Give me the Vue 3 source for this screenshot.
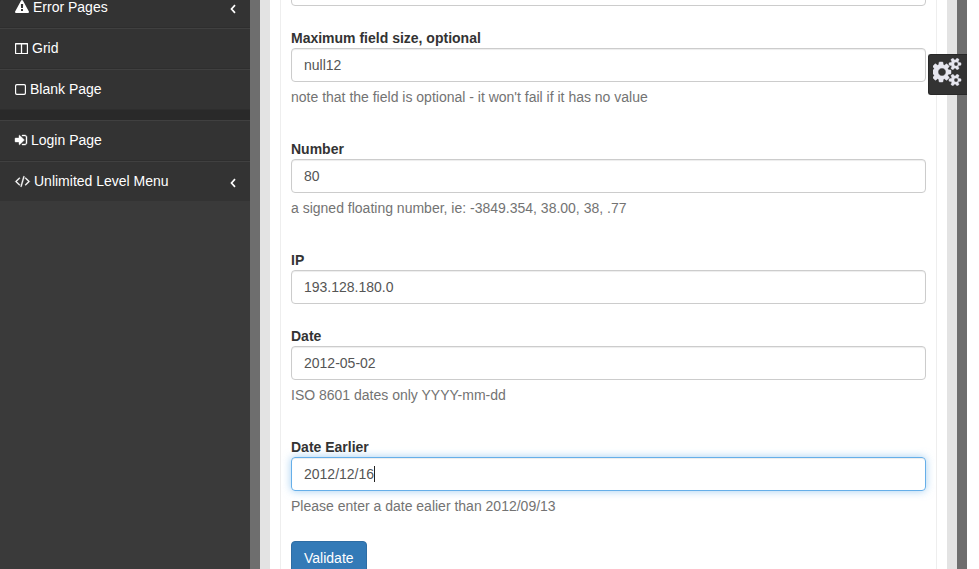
<script setup>
import { ref } from 'vue'

const menu = [
  { label: 'Error Pages', icon: 'warning', width: 14, expandable: true },
  { label: 'Grid', icon: 'columns', width: 13 },
  { label: 'Blank Page', icon: 'square', width: 11, divider: true },
  { label: 'Login Page', icon: 'signin', width: 12 },
  { label: 'Unlimited Level Menu', icon: 'code', width: 15, expandable: true }
]

const fields = ref([
  { id: 'max', label: 'Maximum field size, optional', value: 'null12', help: "note that the field is optional - it won't fail if it has no value" },
  { id: 'number', label: 'Number', value: '80', help: 'a signed floating number, ie: -3849.354, 38.00, 38, .77' },
  { id: 'ip', label: 'IP', value: '193.128.180.0' },
  { id: 'date', label: 'Date', value: '2012-05-02', help: 'ISO 8601 dates only YYYY-mm-dd' },
  { id: 'earlier', label: 'Date Earlier', value: '2012/12/16', help: 'Please enter a date ealier than 2012/09/13', active: true }
])

const smallCog = 'v140q0 16-149 31-12 27-30 52 51 113 51 138 0 4-4 7-122 71-124 71-8 0-46-47t-52-68q-20 2-30 2t-30-2q-14 21-52 68t-46 47q-2 0-124-71-4-3-4-7 0-25 51-138-18-25-30-52-149-15-149-31v-140q0-16 149-31 13-29 30-52-51-113-51-138 0-4 4-7 4-2 35-20t59-34 30-16q8 0 46 46.5t52 67.5q20-2 30-2t30 2q51-71 92-112l6-2q4 0 124 70 4 3 4 7 0 25-51 138 17 23 30 52 149 15 149 31z'
const cogs = 'M832 896q0-106-75-181t-181-75-181 75-75 181 75 181 181 75 181-75 75-181zm768 512q0-52-38-90t-90-38-90 38-38 90q0 53 37.5 90.5t90.5 37.5 90.5-37.5 37.5-90.5zm0-1024q0-52-38-90t-90-38-90 38-38 90q0 53 37.5 90.5t90.5 37.5 90.5-37.5 37.5-90.5zM1152 805v185q0 10-7 19.5t-16 10.5l-155 24q-11 35-32 76 34 48 90 115 7 11 7 20 0 12-7 19-23 30-82.5 89.5t-78.5 59.5q-11 0-21-7l-115-90q-37 19-77 31-11 108-23 155-7 24-30 24h-186q-11 0-20-7.5t-10-17.5l-23-153q-34-10-75-31l-118 89q-7 7-20 7-11 0-21-8-144-133-144-160 0-9 7-19 10-14 41-53t47-61q-23-44-35-82l-152-24q-10-1-17-9.5t-7-19.5v-185q0-10 7-19.5t16-10.5l155-24q11-35 32-76-34-48-90-115-7-11-7-20 0-12 7-20 22-30 82-89t79-59q11 0 21 7l115 90q34-18 77-32 11-108 23-154 7-24 30-24h186q11 0 20 7.5t10 17.5l23 153q34 10 75 31l118-89q8-7 20-7 11 0 21 8 144 133 144 160 0 8-7 19-12 16-42 54t-45 60q23 48 34 82l152 23q10 2 17 10.5t7 19.5zM1792 1338' + smallCog + 'M1792 314' + smallCog
</script>

<template>
  <div class="page">
    <aside class="sidebar">
      <ul class="menu">
        <template v-for="item in menu" :key="item.label">
          <li class="item">
            <svg class="icon" :class="item.icon" :style="{ width: item.width + 'px' }" :viewBox="`0 0 ${item.width * 128} 1792`">
              <path v-if="item.icon === 'warning'" d="M1024 1375v-190q0-14-9.5-23.5t-22.5-9.5h-192q-13 0-22.5 9.5t-9.5 23.5v190q0 14 9.5 23.5t22.5 9.5h192q13 0 22.5-9.5t9.5-23.5zm-2-374l18-459q0-12-10-19-13-11-24-11h-220q-11 0-24 11-10 7-10 21l17 457q0 10 10 16.5t24 6.5h185q14 0 23.5-6.5t10.5-16.5zm-14-934l768 1408q35 63-2 126-17 29-46.5 46t-63.5 17h-1536q-34 0-63.5-17t-46.5-46q-37-63-2-126l768-1408q17-31 47-49t65-18 65 18 47 49z" />
              <path v-else-if="item.icon === 'columns'" fill-rule="evenodd" d="M100 256h1500q64 0 64 64v1280q0 64-64 64h-1500q-64 0-100-64v-1280q0-64 100-64zM150 460v1076h600v-1076zM914 460v1076h600v-1076z" />
              <path v-else-if="item.icon === 'square'" fill-rule="evenodd" d="M224 256h960q224 0 224 224v960q0 224-224 224h-960q-224 0-224-224v-960q0-224 224-224zM250 406q-100 0-100 100v908q0 100 100 100h908q100 0 100-100v-908q0-100-100-100z" />
              <path v-else-if="item.icon === 'signin'" transform="translate(-128 0)" d="M1312 896q0 26-19 45l-544 544q-19 19-45 19t-45-19-19-45v-288h-448q-26 0-45-19t-19-45v-384q0-26 19-45t45-19h448v-288q0-26 19-45t45-19 45 19l544 544q19 19 19 45zm352-352v704q0 119-84.500 203.500t-203.500 84.500h-320q-13 0-22.500-9.500t-9.500-22.500q0-4-1-20t-.5-26.500 3-23.500 10-19.500 20.500-6.500h320q66 0 113-47t47-113v-704q0-66-47-113t-113-47h-312l-11.500-1-11.500-3-8-5.500-7-9-2-13.500q0-4-1-20t-.5-26.500 3-23.500 10-19.500 20.500-6.500h320q119 0 203.500 84.500t84.500 203.500z" />
              <path v-else transform="translate(64 0)" d="M553 1399l-50 50q-10 10-23 10t-23-10l-466-466q-10-10-10-23t10-23l466-466q10-10 23-10t23 10l50 50q10 10 10 23t-10 23l-393 393 393 393q10 10 10 23t-10 23zm591-1067l-373 1291q-4 13-15.500 19.500t-23.500 2.500l-62-17q-13-4-19.500-15.500t-2.500-24.500l373-1291q4-13 15.500-19.500t23.500-2.500l62 17q13 4 19.500 15.500t2.500 24.500zm657 651l-466 466q-10 10-23 10t-23-10l-50-50q-10-10-10-23t10-23l393-393-393-393q-10-10-10-23t10-23l50-50q10-10 23-10t23 10l466 466q10 10 10 23t-10 23z" />
            </svg>
            <span class="label">{{ item.label }}</span>
            <svg v-if="item.expandable" class="angle" viewBox="0 0 6 10"><path d="M5 1.200L1.500 5L5 8.800" /></svg>
          </li>
          <li v-if="item.divider" class="divider"></li>
        </template>
      </ul>
    </aside>

    <main class="content">
      <section class="panel">
        <div class="input previous"></div>
        <div v-for="f in fields" :key="f.id" class="group">
          <label :for="f.id">{{ f.label }}</label>
          <div :id="f.id" class="input" :class="{ active: f.active }">{{ f.value }}<i v-if="f.active" class="caret"></i></div>
          <p v-if="f.help" class="help">{{ f.help }}</p>
        </div>
        <button class="btn">Validate</button>
      </section>
    </main>

    <div class="settings">
      <svg viewBox="0 0 1920 1792"><path fill-rule="evenodd" :d="cogs" /></svg>
    </div>
  </div>
</template>

<style>
body { background: #fff; overflow: hidden; }
</style>

<style scoped>
* { box-sizing: border-box; }
.page {
  position: relative;
  display: flex;
  width: 967px;
  height: 569px;
  overflow: hidden;
  font: 14px/20px "Liberation Sans", Arial, sans-serif;
  color: #333;
}
.sidebar { width: 250px; background: #3a3a3a; }
.menu { list-style: none; margin: -13px 0 0; padding: 0; background: #333; }
.item {
  display: flex;
  align-items: center;
  height: 41px;
  padding: 0 14px 2px 15px;
  border-top: 1px solid #404040;
  border-bottom: 1px solid #2e2e2e;
  color: #fff;
}
.item:last-child { height: 40px; padding-bottom: 1px; border-bottom-color: #333; }
.icon { height: 14px; flex: none; fill: #fff; overflow: visible; }
.signin, .code { stroke: #fff; stroke-width: 50; }
.label { flex: 1; margin-left: 4px; }
.angle { width: 6px; height: 10px; margin-top: 5px; fill: none; stroke: #fff; stroke-width: 1.7; }
.divider { height: 10px; background: #292929; }
.content {
  flex: 1;
  padding: 0 10px;
  background: #fff;
  border: solid #6e6e6e;
  border-width: 0 10px;
  box-shadow: inset 10px 0 #e3e3e3, inset -10px 0 #e3e3e3;
}
.panel {
  height: 569px;
  width: 657px;
  margin-left: 10px;
  padding: 0 10px;
  border: solid #eee;
  border-width: 0 1px;
  overflow: hidden;
}
.previous { margin: -28px 0 22px; }
.group { margin-bottom: 22px; }
label { display: block; font-weight: bold; }
.input {
  display: flex;
  align-items: center;
  height: 34px;
  padding: 0 12px;
  border: 1px solid #ccc;
  border-radius: 4px;
  box-shadow: inset 0 1px 1px rgba(0, 0, 0, .075);
  color: #555;
}
.active { border-color: #66afe9; box-shadow: inset 0 1px 1px rgba(0, 0, 0, .075), 0 0 8px rgba(102, 175, 233, .6); }
.caret { width: 1px; height: 16px; background: #222; }
.help { margin: 5px 0 32px; color: #737373; }
.group:nth-last-child(2) { margin-bottom: 0; }
.group:nth-last-child(2) .help { margin-bottom: 25px; }
.btn {
  display: block;
  height: 34px;
  padding: 0 12px;
  border: 1px solid #2e6da4;
  border-radius: 4px;
  background: #337ab7;
  color: #fff;
  font: inherit;
}
.settings {
  position: absolute;
  top: 54px;
  right: 0;
  width: 39px;
  height: 41px;
  padding: 3px 4px 0 4px;
  border-radius: 3px 0 0 3px;
  background: #333;
  border: 1px solid #282828;
  border-right: 0;
}
.settings svg { display: block; width: 30px; height: 28px; fill: #e6e6ef; stroke: #e6e6ef; stroke-width: 30; }
</style>
